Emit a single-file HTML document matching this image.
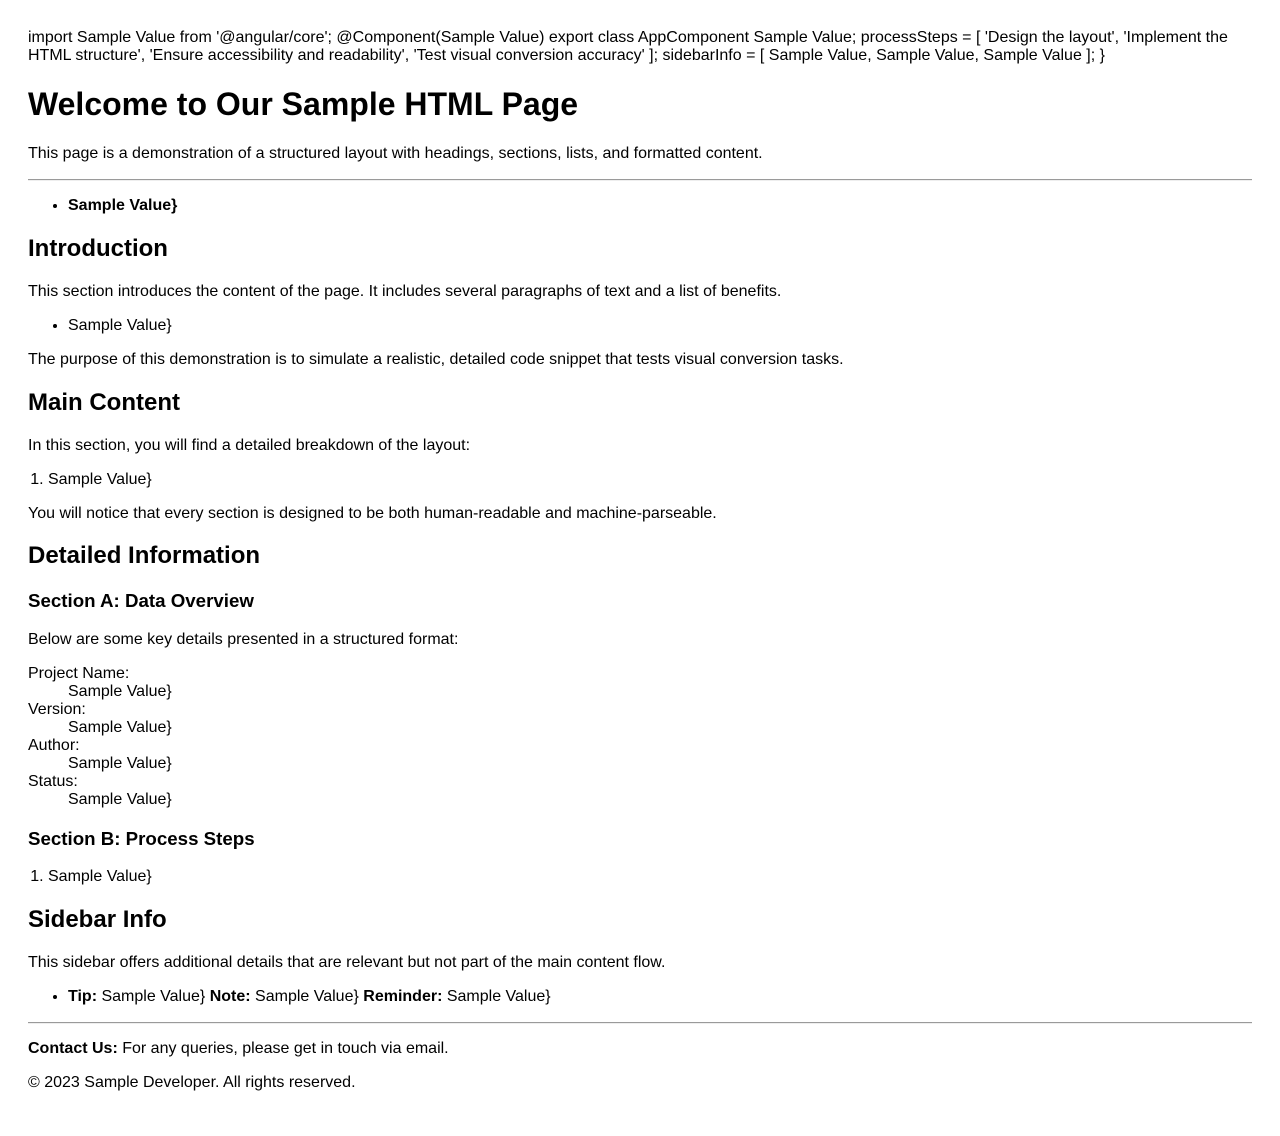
<!DOCTYPE html>
<html>
<head>
<meta charset="utf-8">
<style>
body{margin:8px;padding:21px 20px 20px 20px;font-family:"Liberation Sans",Arial,sans-serif;font-size:16px;line-height:18px;color:#000;background:#fff;}
h1{font-size:32px;margin:21.44px 0;line-height:37px;}
h2{font-size:24px;margin:19.92px 0;line-height:28px;}
h3{font-size:18.72px;margin:18.72px 0;line-height:22px;}
p{margin:16px 0;}
ul{margin:16px 0;padding-left:40px;}
ol{margin:16px 0;padding-left:20px;}
dl{margin:16px 0;}
dd{margin-left:40px;}
hr{border:0;border-top:1px solid #9a9a9a;border-bottom:1px solid #eee;margin:8px 0;}
</style>
</head>
<body>
<div>import Sample Value from '@angular/core'; @Component(Sample Value) export class AppComponent Sample Value; processSteps = [ 'Design the layout', 'Implement the HTML structure', 'Ensure accessibility and readability', 'Test visual conversion accuracy' ]; sidebarInfo = [ Sample Value, Sample Value, Sample Value ]; }</div>
<h1>Welcome to Our Sample HTML Page</h1>
<p>This page is a demonstration of a structured layout with headings, sections, lists, and formatted content.</p>
<hr>
<ul><li><b>Sample Value}</b></li></ul>
<h2>Introduction</h2>
<p>This section introduces the content of the page. It includes several paragraphs of text and a list of benefits.</p>
<ul><li>Sample Value}</li></ul>
<p>The purpose of this demonstration is to simulate a realistic, detailed code snippet that tests visual conversion tasks.</p>
<h2>Main Content</h2>
<p>In this section, you will find a detailed breakdown of the layout:</p>
<ol><li>Sample Value}</li></ol>
<p>You will notice that every section is designed to be both human-readable and machine-parseable.</p>
<h2>Detailed Information</h2>
<h3>Section A: Data Overview</h3>
<p>Below are some key details presented in a structured format:</p>
<dl>
<dt>Project Name:</dt><dd>Sample Value}</dd>
<dt>Version:</dt><dd>Sample Value}</dd>
<dt>Author:</dt><dd>Sample Value}</dd>
<dt>Status:</dt><dd>Sample Value}</dd>
</dl>
<h3>Section B: Process Steps</h3>
<ol><li>Sample Value}</li></ol>
<h2>Sidebar Info</h2>
<p>This sidebar offers additional details that are relevant but not part of the main content flow.</p>
<ul><li><b>Tip:</b> Sample Value} <b>Note:</b> Sample Value} <b>Reminder:</b> Sample Value}</li></ul>
<hr>
<p><b>Contact Us:</b> For any queries, please get in touch via email.</p>
<p>© 2023 Sample Developer. All rights reserved.</p>
</body>
</html>
